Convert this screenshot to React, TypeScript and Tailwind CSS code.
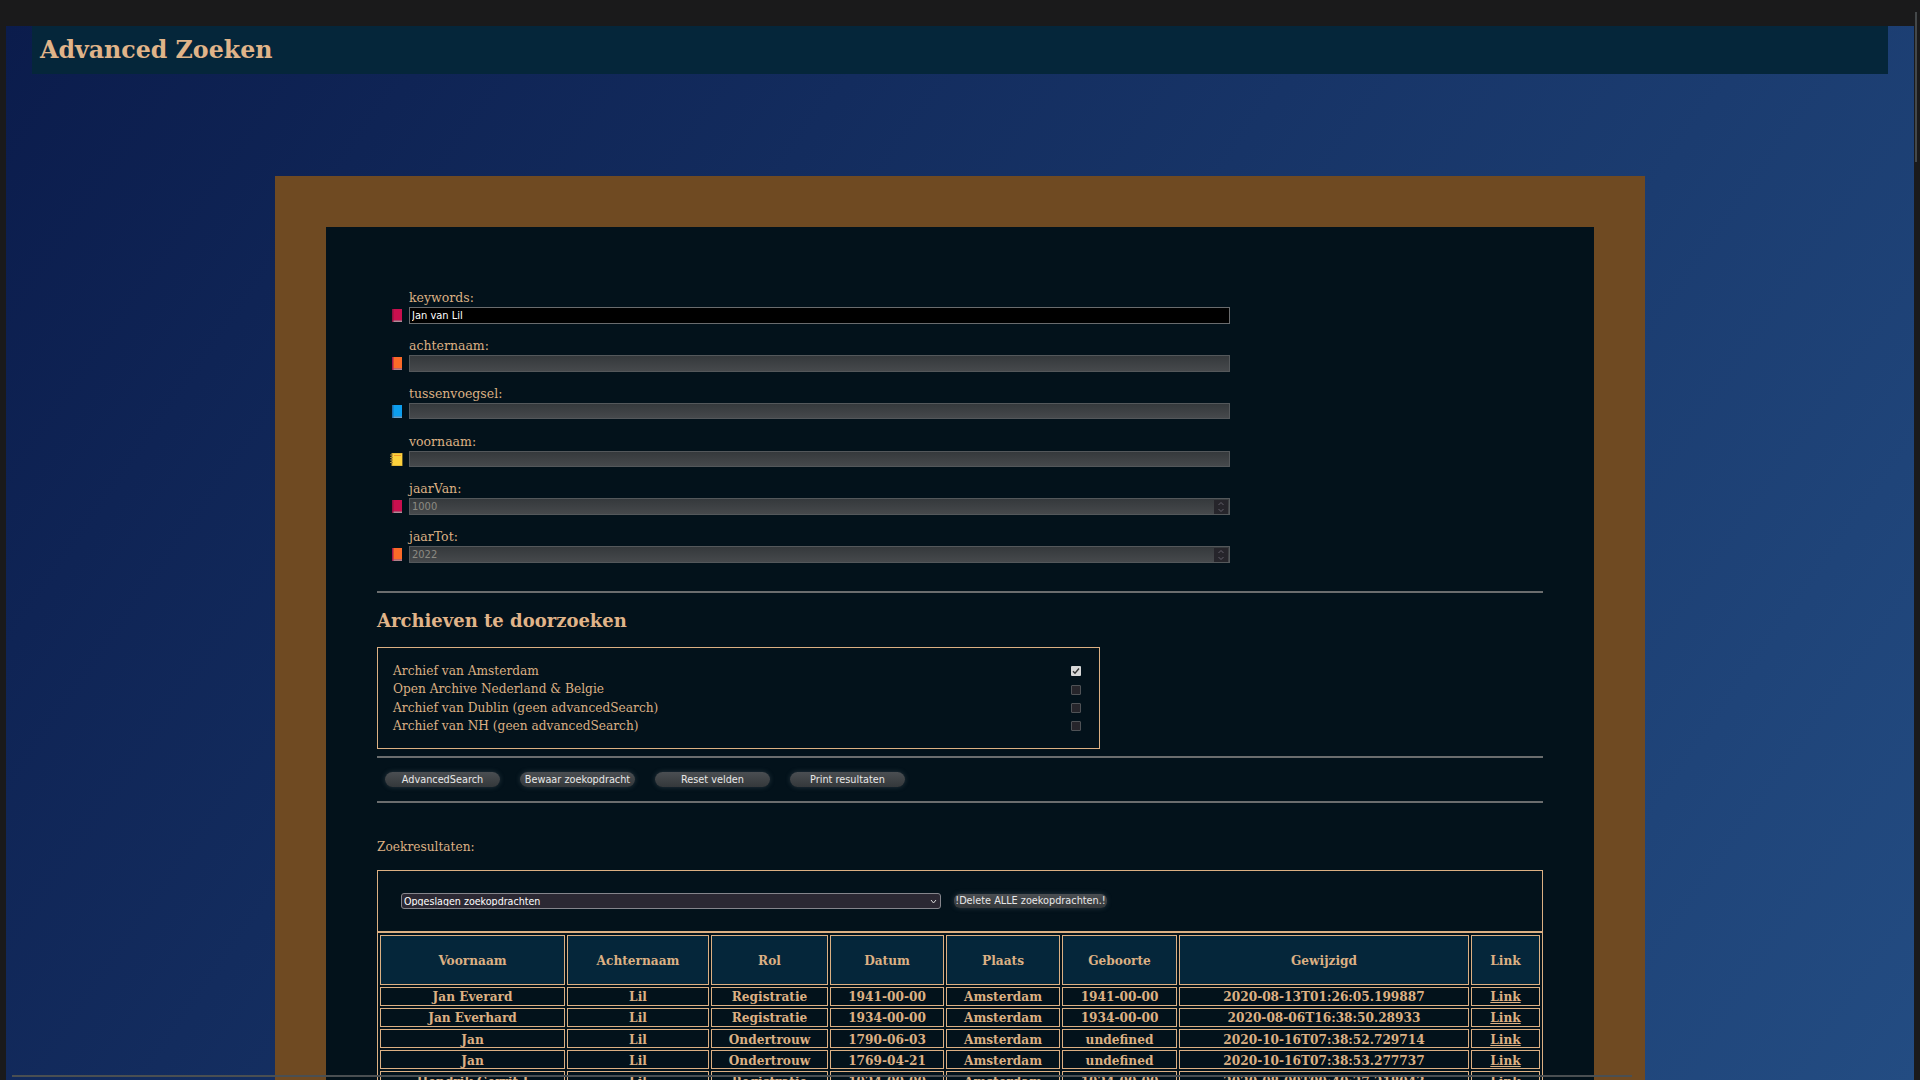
const FIELDS = [
  { label: "keywords:", value: "Jan van Lil", icon: "crimson", active: true, box: "mb-[14px]", h: "h-[17px]" },
  { label: "achternaam:", value: "", icon: "orange", box: "mb-[14px]", h: "h-[17px]" },
  { label: "tussenvoegsel:", value: "", icon: "blue", box: "mb-[15px]", h: "h-[16px]" },
  { label: "voornaam:", value: "", icon: "note", box: "mb-[14px]", h: "h-[16px]" },
  { label: "jaarVan:", value: "1000", icon: "crimson", spin: true, box: "mb-[14px]", h: "h-[17px]" },
  { label: "jaarTot:", value: "2022", icon: "orange", spin: true, box: "", h: "h-[17px]" },
];

const ARCHIVES = [
  { name: "Archief van Amsterdam", checked: true },
  { name: "Open Archive Nederland & Belgie", checked: false },
  { name: "Archief van Dublin (geen advancedSearch)", checked: false },
  { name: "Archief van NH (geen advancedSearch)", checked: false },
];

const BUTTONS = ["AdvancedSearch", "Bewaar zoekopdracht", "Reset velden", "Print resultaten"];

const COLUMNS = [
  { name: "Voornaam", width: "w-[185px]" },
  { name: "Achternaam", width: "w-[142px]" },
  { name: "Rol", width: "w-[117px]" },
  { name: "Datum", width: "w-[114px]" },
  { name: "Plaats", width: "w-[114px]" },
  { name: "Geboorte", width: "w-[115px]" },
  { name: "Gewijzigd", width: "w-[290px]" },
  { name: "Link", width: "w-[69px]" },
];

const ROWS = [
  ["Jan Everard", "Lil", "Registratie", "1941-00-00", "Amsterdam", "1941-00-00", "2020-08-13T01:26:05.199887"],
  ["Jan Everhard", "Lil", "Registratie", "1934-00-00", "Amsterdam", "1934-00-00", "2020-08-06T16:38:50.28933"],
  ["Jan", "Lil", "Ondertrouw", "1790-06-03", "Amsterdam", "undefined", "2020-10-16T07:38:52.729714"],
  ["Jan", "Lil", "Ondertrouw", "1769-04-21", "Amsterdam", "undefined", "2020-10-16T07:38:53.277737"],
  ["Hendrik Gerrit J", "Lil", "Registratie", "1924-00-00", "Amsterdam", "1924-00-00", "2020-08-09T09:40:27.218043"],
];

function FieldIcon({ kind }: { kind: string }) {
  if (kind === "note") {
    return (
      <svg width="13" height="13" viewBox="0 0 13 13" className="-ml-[2px] -mr-[1px] shrink-0">
        <rect x="1.5" y="0" width="11" height="13" fill="#c9a032" />
        <rect x="2.5" y="0.5" width="9.5" height="12" fill="#fdd23c" />
        <path d="M0 2h3M0 4.5h3M0 7h3M0 9.5h3" stroke="#a8873a" strokeWidth="1" />
        <path d="M4 2.5h7" stroke="#f39a2a" strokeWidth="1" />
      </svg>
    );
  }
  const colors: Record<string, { main: string; spine: string; page: string }> = {
    crimson: { main: "#c90f4e", spine: "#8f1240", page: "#b08a98" },
    orange: { main: "#fb6a28", spine: "#a3174a", page: "#b0808a" },
    blue: { main: "#0c9eee", spine: "#1b6cae", page: "#6aa0c8" },
  };
  const c = colors[kind];
  return (
    <svg width="10" height="13" viewBox="0 0 10 13" className="shrink-0">
      <rect width="10" height="13" fill={c.spine} />
      <rect x="1.5" width="8.5" height="11.5" fill={c.main} />
      <rect x="1.5" y="11.5" width="8.5" height="1.5" fill={c.page} />
    </svg>
  );
}

function Spinner() {
  return (
    <div className="absolute right-[2px] top-[2px] bottom-[1px] w-[14px] bg-[#26252b] flex items-center justify-center">
      <svg width="8" height="12" viewBox="0 0 8 12" fill="none">
        <path d="M1.5 4L4 1.5L6.5 4M1.5 8L4 10.5L6.5 8" stroke="#625f6a" strokeWidth="1" />
      </svg>
    </div>
  );
}

function Divider() {
  return <div className="h-[2px] bg-[#6b6d6e]" />;
}

export default function App() {
  return (
    <div className="relative h-[1080px] w-full overflow-hidden bg-[#1a1a1b] pt-[26px] pl-[6px] pr-[6px] [font-family:'DejaVu_Serif',serif] text-[#dcb083]">
      <div className="h-[1054px] overflow-hidden bg-[linear-gradient(125deg,#0b1c4c_0%,#234c82_100%)]">
        {/* Header */}
        <div className="ml-[26px] mr-[26px] h-[48px] bg-[#05263a] flex items-center pl-[8px] pt-[1px]">
          <h1 className="text-[23.7px] font-bold text-[#e0b489] leading-none">Advanced Zoeken</h1>
        </div>

        {/* Frame */}
        <div className="mt-[102px] ml-[269px] w-[1370px] border-[51px] border-[#6f4a22] bg-[#03121b] px-[51px] pt-[63px] pb-[40px]">
          {/* Search fields */}
          <div className="pl-[15px]">
            {FIELDS.map((f) => (
              <div key={f.label} className={f.box}>
                <label className="block h-[17px] pl-[17px] text-[12.5px] leading-[15px]">{f.label}</label>
                <div className="flex items-center gap-[7px]">
                  <FieldIcon kind={f.icon} />
                  <div className={`relative w-[821px] ${f.h}`}>
                    <input
                      readOnly
                      value={f.value}
                      className={
                        f.active
                          ? "block w-full h-full bg-black border border-[#6a6c6e] px-[2px] text-[11px] text-white [font-family:'DejaVu_Sans_Condensed','Noto_Sans',sans-serif] outline-none"
                          : "block w-full h-full bg-gradient-to-b from-[#35393c] to-[#46494c] border border-[#54585b] px-[2px] text-[11px] text-[#8c8a82] [font-family:'DejaVu_Sans_Condensed','Noto_Sans',sans-serif] outline-none"
                      }
                    />
                    {f.spin && <Spinner />}
                  </div>
                </div>
              </div>
            ))}
          </div>

          <div className="mt-[28px]">
            <Divider />
          </div>

          {/* Archives */}
          <h2 className="h-[54px] flex items-center text-[18px] font-bold text-[#e0b489]">Archieven te doorzoeken</h2>
          <div className="w-[723px] h-[102px] border border-[#dcb083] pl-[15px] pr-[18px] pt-[14px]">
            {ARCHIVES.map((a) => (
              <div key={a.name} className="h-[18.4px] flex items-center justify-between text-[12.2px]">
                <span>{a.name}</span>
                {a.checked ? (
                  <span className="w-[10px] h-[10px] rounded-[1px] bg-[#d8d8d8] flex items-center justify-center">
                    <svg width="8" height="8" viewBox="0 0 8 8" fill="none">
                      <path d="M1 4.2L3 6.3L7 1.5" stroke="#333" strokeWidth="1.4" />
                    </svg>
                  </span>
                ) : (
                  <span className="w-[10px] h-[10px] rounded-[1px] bg-[#26252b] border border-[#4f5256]" />
                )}
              </div>
            ))}
          </div>

          <div className="mt-[7px]">
            <Divider />
          </div>

          {/* Buttons */}
          <div className="mt-[14px] ml-[8px] flex gap-[20px]">
            {BUTTONS.map((b) => (
              <button
                key={b}
                className="w-[115px] h-[15px] pt-[1px] rounded-full bg-gradient-to-b from-[#4a4e52] to-[#34383b] shadow-[0_0_5px_rgba(110,120,130,0.35)] text-[10.8px] leading-none text-[#e8e8e8] [font-family:'DejaVu_Sans_Condensed','Noto_Sans',sans-serif]"
              >
                {b}
              </button>
            ))}
          </div>

          <div className="mt-[14px]">
            <Divider />
          </div>

          <p className="mt-[35px] h-[17px] text-[12.2px] leading-[18px]">Zoekresultaten:</p>

          {/* Results */}
          <div className="mt-[15px] h-[62px] border border-[#dcb083] flex items-center pl-[23px] gap-[13px]">
            <div className="relative w-[540px] h-[16px]">
              <select className="block w-full h-full appearance-none bg-[#2b2833] border border-[#85858c] rounded-[3px] px-[2px] text-[10.6px] leading-none text-white [font-family:'DejaVu_Sans_Condensed','Noto_Sans',sans-serif] outline-none">
                <option>Opgeslagen zoekopdrachten</option>
              </select>
              <svg width="7" height="5" viewBox="0 0 7 5" fill="none" className="absolute right-[4px] top-[6px]">
                <path d="M1 1L3.5 4L6 1" stroke="#d8d8d8" strokeWidth="1" />
              </svg>
            </div>
            <button className="w-[153px] h-[14px] pt-[1px] rounded-[6px] bg-gradient-to-b from-[#4a4e52] to-[#34383b] shadow-[0_0_5px_rgba(110,120,130,0.35)] text-[10.8px] leading-none text-[#e8e8e8] [font-family:'DejaVu_Sans_Condensed','Noto_Sans',sans-serif] whitespace-nowrap">
              !Delete ALLE zoekopdrachten.!
            </button>
          </div>

          <table className="table-fixed w-[1166px] border border-[#dcb083] border-separate border-spacing-[2px] text-[13.5px] font-bold text-center [font-family:'DejaVu_Serif_Condensed','DejaVu_Serif',serif]">
            <colgroup>
              {COLUMNS.map((c) => (
                <col key={c.name} className={c.width} />
              ))}
            </colgroup>
            <thead>
              <tr>
                {COLUMNS.map((c) => (
                  <th key={c.name} className="h-[50px] p-0 pt-[1px] bg-[#05263a] border border-[#dcb083] font-bold">
                    {c.name}
                  </th>
                ))}
              </tr>
            </thead>
            <tbody>
              {ROWS.map((row, i) => (
                <tr key={i}>
                  {row.map((cell, j) => (
                    <td key={j} className={i > 1 ? "h-[19px] p-0 pt-[2px] leading-none border border-[#dcb083]" : "h-[19px] p-0 leading-none border border-[#dcb083]"}>
                      {cell}
                    </td>
                  ))}
                  <td className={i > 1 ? "h-[19px] p-0 pt-[2px] leading-none border border-[#dcb083] underline" : "h-[19px] p-0 leading-none border border-[#dcb083] underline"}>Link</td>
                </tr>
              ))}
            </tbody>
          </table>
        </div>
      </div>

      {/* Overlay scrollbars */}
      <div className="absolute right-[3px] top-[12px] w-[2px] h-[150px] bg-[#44484a]" />
      <div className="absolute left-[12px] top-[1075px] w-[1620px] h-[2px] bg-[#4a4f52]" />
    </div>
  );
}
